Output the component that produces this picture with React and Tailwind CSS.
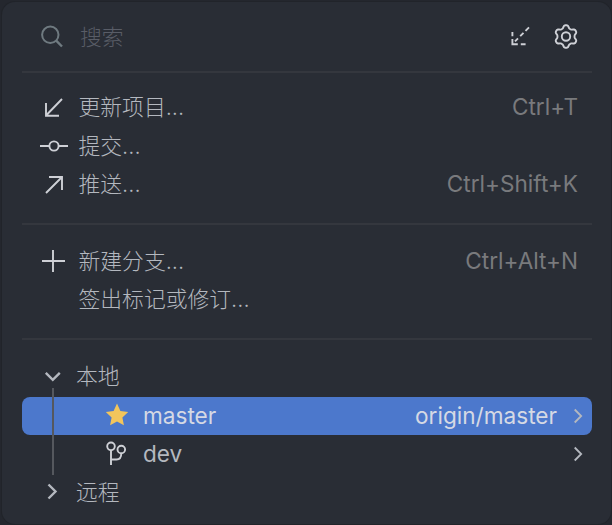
import React from "react";

const stroke = { fill: "none", stroke: "#ced0d6", strokeWidth: 1.9 };

// Six-lobed outline of the settings gear, centred on (14, 14)
const gearPath =
  Array.from({ length: 96 }, (_, i) => {
    const a = (i / 96) * Math.PI * 2;
    const r = 9.9 + 1.5 * Math.tanh(1.5 * Math.cos(6 * a));
    return `${i ? "L" : "M"}${(14 + r * Math.sin(a)).toFixed(2)} ${(14 - r * Math.cos(a)).toFixed(2)}`;
  }).join("") + "Z";

function Icon({ children, className = "" }) {
  return (
    <svg width="28" height="28" viewBox="0 0 28 28" className={`shrink-0 ${className}`} {...stroke}>
      {children}
    </svg>
  );
}

function Divider() {
  return <div className="mr-[19px] ml-5 h-[2px] shrink-0 bg-[#34373e]" />;
}

function Row({ icon, label, shortcut }) {
  return (
    <div className="flex h-[38.5px] items-center pr-[33px] pl-[38px]">
      <div className="w-[38.5px] shrink-0">{icon}</div>
      <span>{label}</span>
      <span className="ml-auto text-[22.6px] font-normal text-[#797a7d]">{shortcut}</span>
    </div>
  );
}

function Chevron() {
  return (
    <svg width="12" height="18" viewBox="0 0 12 18" className="shrink-0" fill="none" stroke="#b4b8bf" strokeWidth="1.8">
      <path d="M2.7 2.5L9.2 9L2.7 15.5" />
    </svg>
  );
}

export default function App() {
  return (
    <div className="h-[525px] w-[612px] overflow-hidden bg-[#24272e] pt-[2px] pl-[2px] font-['Inter','Noto_Sans_CJK_SC',sans-serif] text-[21.8px] leading-[30px] font-light text-[#b4b8bf]">
      <div className="flex h-[522px] w-[609px] flex-col rounded-[13px] bg-[#292d35] shadow-[0_0_0_1px_#21242a]">
        <div className="flex h-[69px] shrink-0 items-center pr-[31px] pl-[38px]">
          <svg width="28" height="28" viewBox="0 0 28 28" fill="none" stroke="#6f7a80" strokeWidth="2">
            <circle cx="10.3" cy="11.8" r="8.2" />
            <path d="M16.2 17.7L22 23.5" strokeWidth="2.4" />
          </svg>
          <span className="ml-[12px] text-[#595d67]">搜索</span>
          <Icon className="ml-auto">
            <path d="M5.4 9V13.3M5.4 16V21.2H10.8M13.8 21.2H18.6M8 18.3L11 15.3M13.2 13.1L16.5 9.8M18.5 7.8L22 4.3" />
          </Icon>
          <Icon className="ml-[17px] -translate-y-[0.5px]">
            <path d={gearPath} strokeLinejoin="round" />
            <circle cx="14" cy="14" r="4.2" />
          </Icon>
        </div>
        <Divider />
        <div className="pt-[15px] pb-[19px]">
          <Row
            icon={<Icon><path d="M6 10V22.7H19M6.5 22L22 6" /></Icon>}
            label="更新项目..."
            shortcut="Ctrl+T"
          />
          <Row
            icon={<Icon><path d="M0 14H9.3M18.7 14H28" /><circle cx="14" cy="14" r="4.6" /></Icon>}
            label="提交..."
          />
          <Row
            icon={<Icon><path d="M9 7H22V20M21.5 7.5L6 23" /></Icon>}
            label="推送..."
            shortcut="Ctrl+Shift+K"
          />
        </div>
        <Divider />
        <div className="pt-[17px] pb-[19px]">
          <Row
            icon={<Icon><path d="M2 14H25M13 3V25" /></Icon>}
            label="新建分支..."
            shortcut="Ctrl+Alt+N"
          />
          <Row label="签出标记或修订..." />
        </div>
        <Divider />
        <div className="relative pt-[17px]">
          <div className="flex h-[40px] items-center pb-px pl-[37px]">
            <Icon className="mr-[9px]"><path d="M6.8 10.8L13.8 17.8L20.8 10.8" strokeWidth="2.4" stroke="#b4b8bf" /></Icon>
            <span>本地</span>
          </div>
          <div className="mr-[19px] ml-5 flex h-[38px] items-center rounded-lg bg-[#4c78cc] pr-2 pl-[81px] text-[22.6px] font-normal text-[#d5d9e4]">
            <svg width="28" height="28" viewBox="0 0 28 28" fill="#f2c55c">
              <path d="M14 1.5L17.4 8.9L25.2 9.9L19.4 15.4L20.9 23.2L14 19.4L7.1 23.2L8.6 15.4L2.8 9.9L10.6 8.9Z" />
            </svg>
            <span className="ml-3 -translate-y-[0.5px]">master</span>
            <span className="mr-[15px] ml-auto -translate-y-[0.5px]">origin/master</span>
            <Chevron />
          </div>
          <div className="mr-[19px] ml-5 flex h-[38px] items-center pr-2 pl-[81px] text-[22.6px] font-normal">
            <Icon>
              <circle cx="8" cy="6.3" r="3.8" />
              <circle cx="18.3" cy="9.5" r="3.8" />
              <path d="M8 10V25M8 19.5H13.5C17 19.5 18.3 17.5 18.3 13.3" />
            </Icon>
            <span className="mr-auto ml-3">dev</span>
            <Chevron />
          </div>
          <div className="flex h-[38px] items-center pl-[37px]">
            <Icon className="mr-[9px]"><path d="M9.5 6.5L16.5 13.5L9.5 20.5" strokeWidth="2.4" stroke="#b4b8bf" /></Icon>
            <span>远程</span>
          </div>
          <div className="absolute top-[48px] left-[50px] h-[87px] w-[2px] bg-[#55585e]" />
        </div>
      </div>
    </div>
  );
}
